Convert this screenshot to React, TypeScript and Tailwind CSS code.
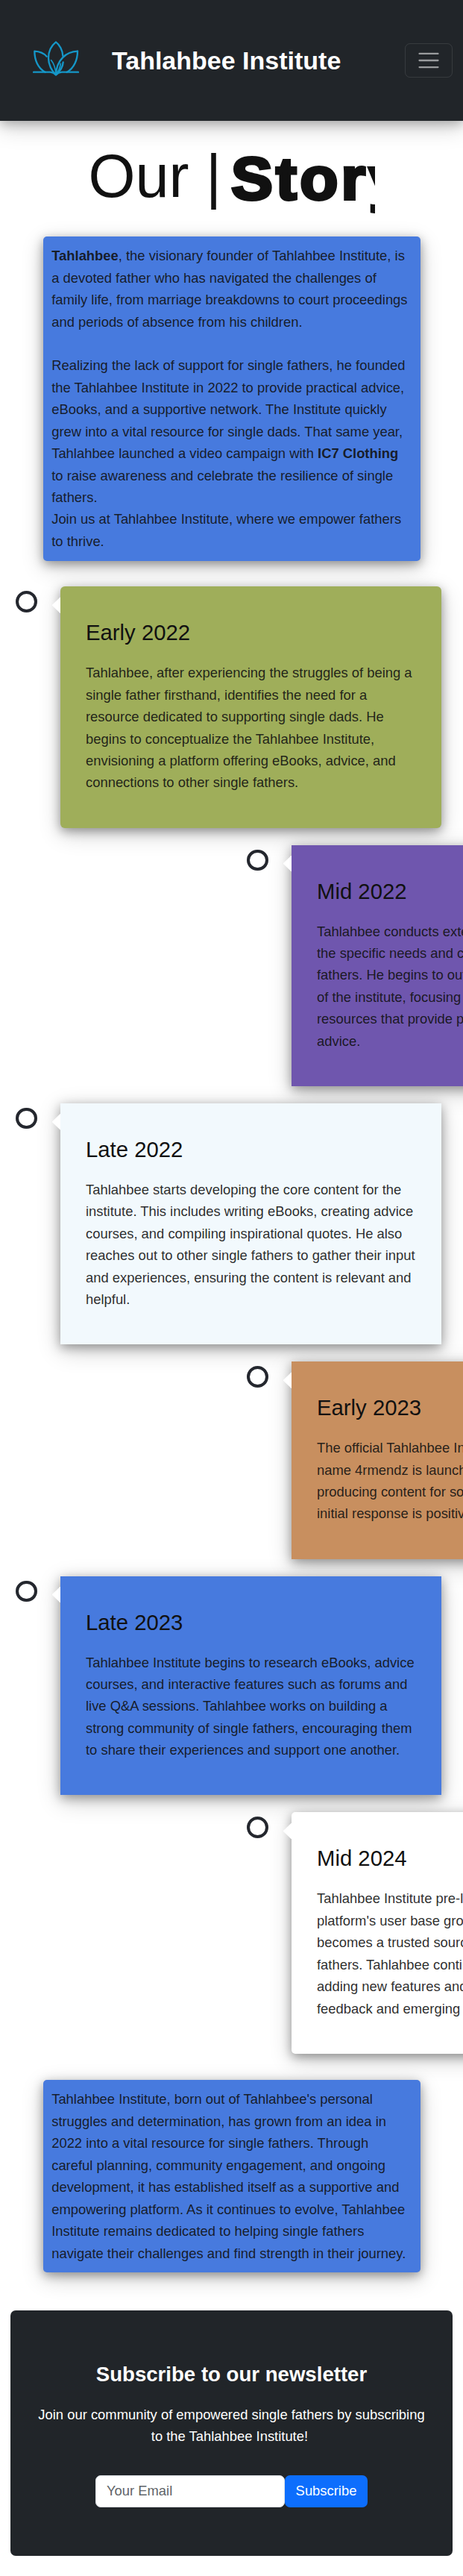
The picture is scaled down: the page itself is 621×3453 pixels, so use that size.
import React from "react";

const cardShadow = "shadow-[0_4px_14px_rgba(0,0,0,0.35),0_8px_30px_rgba(0,0,0,0.2)]";

function Logo() {
  return (
    <svg
      className="h-12 w-[62px] shrink-0"
      viewBox="72 72 186 144"
      fill="none"
      stroke="#1597c8"
      strokeWidth="7"
      strokeLinecap="round"
      strokeLinejoin="round"
    >
      <path d="M193 135C192 112 180 90 165 79C146 94 135 118 135 143C135 170 148 196 165 210" />
      <path d="M128 137C117 125 99 117 79 116C79 150 92 184 122 200" />
      <path d="M252 116C206 118 168 150 165 210C184 194 193 178 194 160" />
      <path d="M252 116C252 150 238 184 209 200" />
      <path d="M146 152C156 164 163 184 165 208M184 166C182 182 176 196 165 208" strokeWidth="5" />
      <path d="M75 200H142C150 201 158 204 165 211C172 204 180 201 188 200H255" />
    </svg>
  );
}

function Header() {
  return (
    <header className="relative flex h-[162px] items-center bg-[#212529] pl-11 pr-3.5 shadow-[0_4px_14px_rgba(0,0,0,0.25),0_8px_30px_rgba(0,0,0,0.18)]">
      <div className="-mt-1.5">
        <Logo />
      </div>
      <span className="ml-11 grow text-[34px] font-bold leading-[51px] text-white">Tahlahbee Institute</span>
      <button
        type="button"
        aria-label="Toggle navigation"
        className="flex h-[46px] w-16 items-center justify-center rounded-[7px] border border-white/10"
      >
        <svg className="size-[34px]" viewBox="0 0 30 30" stroke="rgba(255,255,255,0.55)" strokeWidth="2" strokeLinecap="round">
          <path d="M4 7h22M4 15h22M4 23h22" />
        </svg>
      </button>
    </header>
  );
}

function Box({ children, className = "" }: { children: React.ReactNode; className?: string }) {
  return (
    <div className={`relative ml-[58px] w-[506px] rounded-[5px] bg-[#477ade] p-[11.2px] text-[#111]/90 ${cardShadow} ${className}`}>
      {children}
    </div>
  );
}

type Entry = { title: string; lines: string[]; bg: string; right?: boolean };

const entries: Entry[] = [
  {
    title: "Early 2022",
    bg: "bg-[#9fae5a] rounded-md",
    lines: [
      "Tahlahbee, after experiencing the struggles of being a",
      "single father firsthand, identifies the need for a",
      "resource dedicated to supporting single dads. He",
      "begins to conceptualize the Tahlahbee Institute,",
      "envisioning a platform offering eBooks, advice, and",
      "connections to other single fathers.",
    ],
  },
  {
    title: "Mid 2022",
    bg: "bg-[#6f56ae]",
    right: true,
    lines: [
      "Tahlahbee conducts extensive research to understand",
      "the specific needs and challenges faced by single",
      "fathers. He begins to outline the mission and vision",
      "of the institute, focusing on creating a platform with",
      "resources that provide practical and emotional",
      "advice.",
    ],
  },
  {
    title: "Late 2022",
    bg: "bg-[#f2f9fd]",
    lines: [
      "Tahlahbee starts developing the core content for the",
      "institute. This includes writing eBooks, creating advice",
      "courses, and compiling inspirational quotes. He also",
      "reaches out to other single fathers to gather their input",
      "and experiences, ensuring the content is relevant and",
      "helpful.",
    ],
  },
  {
    title: "Early 2023",
    bg: "bg-[#c88f5f]",
    right: true,
    lines: [
      "The official Tahlahbee Institute website under the",
      "name 4rmendz is launched. Tahlahbee begins",
      "producing content for social media channels. The",
      "initial response is positive and encouraging.",
    ],
  },
  {
    title: "Late 2023",
    bg: "bg-[#477ade]",
    lines: [
      "Tahlahbee Institute begins to research eBooks, advice",
      "courses, and interactive features such as forums and",
      "live Q&A sessions. Tahlahbee works on building a",
      "strong community of single fathers, encouraging them",
      "to share their experiences and support one another.",
    ],
  },
  {
    title: "Mid 2024",
    bg: "bg-white rounded-[5px]",
    right: true,
    lines: [
      "Tahlahbee Institute pre-launches its services. The",
      "platform's user base grows steadily, and it soon",
      "becomes a trusted source of support for single",
      "fathers. Tahlahbee continues to improve the site by",
      "adding new features and content based on user",
      "feedback and emerging needs.",
    ],
  },
];

function TimelineItem({ title, lines, bg, right }: Entry) {
  return (
    <li className={`flex items-start ${right ? "ml-[331px]" : "ml-[21px]"}`}>
      <span className="relative z-10 mt-1.5 size-[28.5px] shrink-0 rounded-full border-4 border-[#24272e] bg-white" />
      <article className={`relative ml-[31.5px] w-[511px] shrink-0 px-[34px] pb-[45.66px] pt-11 ${cardShadow} ${bg}`}>
        <span className="absolute left-[-11.5px] top-3.5 h-[22px] w-[11.5px] bg-white [clip-path:polygon(100%_0,100%_100%,0_50%)]" />
        <h2 className="mb-[22px] text-[29.3px] leading-[35px] text-[#111]">{title}</h2>
        <p className="whitespace-nowrap text-[#111]/90">
          {lines.map((line) => (
            <span key={line} className="block">
              {line}
            </span>
          ))}
        </p>
      </article>
    </li>
  );
}

export default function App() {
  return (
    <div className="h-[3453px] w-[621px] overflow-hidden bg-white font-['Liberation_Sans',Arial,sans-serif] text-[18.4px] leading-[29.44px]">
      <Header />

      <h1 className="flex h-[155px] items-start pl-[118.5px] pt-6 text-[#111]">
        <span className="whitespace-pre text-[81px] leading-[100px]">Our |</span>
        <span className="ml-[9px] mt-px w-[197px] overflow-hidden pl-1">
          <span className="inline-block origin-left scale-x-[1.06] text-[79px] font-bold leading-[105px] tracking-[4px] [-webkit-text-stroke:4px_#111]">
            Story
          </span>
        </span>
      </h1>

      <Box>
        <p>
          <b>Tahlahbee</b>, the visionary founder of Tahlahbee Institute, is
          <br />a devoted father who has navigated the challenges of
          <br />
          family life, from marriage breakdowns to court proceedings
          <br />
          and periods of absence from his children.
        </p>
        <p className="mt-[29.44px]">
          Realizing the lack of support for single fathers, he founded
          <br />
          the Tahlahbee Institute in 2022 to provide practical advice,
          <br />
          eBooks, and a supportive network. The Institute quickly
          <br />
          grew into a vital resource for single dads. That same year,
          <br />
          Tahlahbee launched a video campaign with <b>IC7 Clothing</b>
          <br />
          to raise awareness and celebrate the resilience of single
          <br />
          fathers.
        </p>
        <p>
          Join us at Tahlahbee Institute, where we empower fathers
          <br />
          to thrive.
        </p>
      </Box>

      <ul className="mt-[34.8px] flex flex-col gap-[23px]">
        {entries.map((entry) => (
          <TimelineItem key={entry.title} {...entry} />
        ))}
      </ul>

      <Box className="mt-[35.6px]">
        <p className="whitespace-nowrap">
          Tahlahbee Institute, born out of Tahlahbee's personal
          <br />
          struggles and determination, has grown from an idea in
          <br />
          2022 into a vital resource for single fathers. Through
          <br />
          careful planning, community engagement, and ongoing
          <br />
          development, it has established itself as a supportive and
          <br />
          empowering platform. As it continues to evolve, Tahlahbee
          <br />
          Institute remains dedicated to helping single fathers
          <br />
          navigate their challenges and find strength in their journey.
        </p>
      </Box>

      <section className="relative mx-3.5 mt-[50.5px] flex h-[329px] flex-col items-center rounded-[7px] bg-[#212529] pt-[69px] text-center text-white">
        <h2 className="text-[27.6px] font-bold leading-[33px]">Subscribe to our newsletter</h2>
        <p className="mt-[23px] whitespace-nowrap">
          Join our community of empowered single fathers by subscribing
          <br />
          to the Tahlahbee Institute!&nbsp;
        </p>
        <form className="mt-[37px] flex">
          <input
            type="email"
            placeholder="Your Email"
            className="h-[43px] w-[254px] rounded-[7px] border border-[#dee2e6] bg-white px-3.5 text-[18.4px] placeholder:text-[#5f6468]"
          />
          <button type="button" className="h-[43px] w-[111px] rounded-[7px] bg-[#0d6efd] text-[18.4px]">
            Subscribe
          </button>
        </form>
      </section>
    </div>
  );
}
